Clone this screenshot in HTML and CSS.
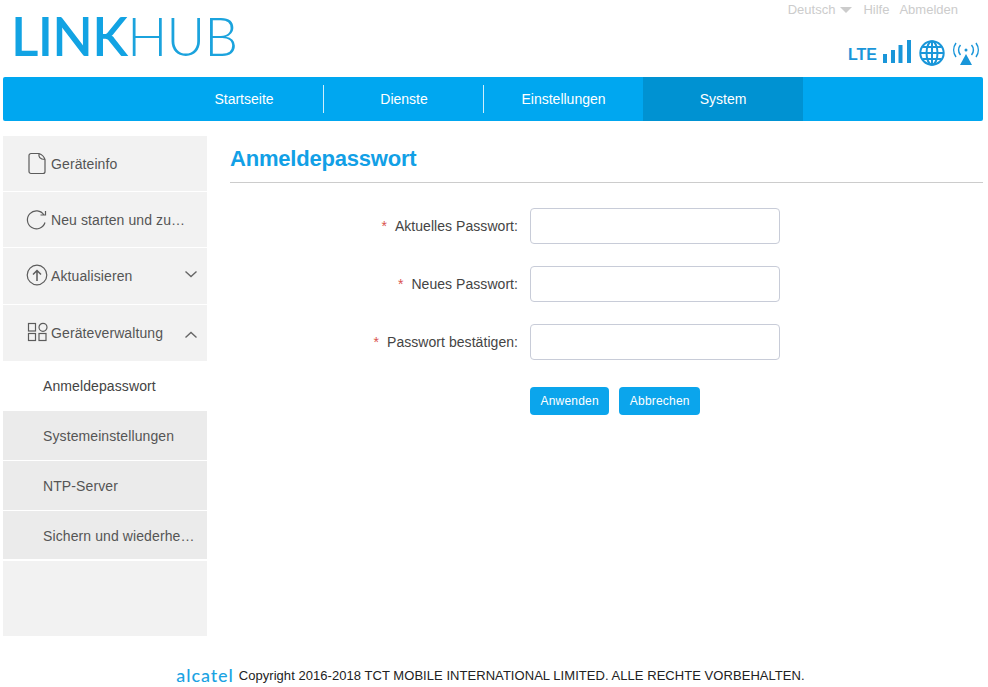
FILE: index.html
```html
<!DOCTYPE html>
<html lang="de">
<head>
    <meta charset="UTF-8">
    <title>LinkHub</title>
    <link rel="stylesheet" href="styles.css">
</head>
<body>
    <div class="header">
        <div class="logo"><b>LINK</b>HUB</div>
        <div class="header-right">
            <div class="toplinks">
                <span class="lang">Deutsch<i class="caret"></i></span>
                <span>Hilfe</span>
                <span>Abmelden</span>
            </div>
            <div class="status">
                <span class="lte">LTE</span>
                <svg class="bars" width="30" height="24" viewBox="0 0 30 24">
                    <rect x="0" y="14" width="4" height="9"/>
                    <rect x="8" y="10" width="4" height="13"/>
                    <rect x="15.500" y="5" width="4" height="18"/>
                    <rect x="24" y="0" width="4" height="23"/>
                </svg>
                <svg class="globe" width="26" height="26" viewBox="0 0 26 26">
                    <circle cx="13" cy="13" r="11.700"/>
                    <ellipse cx="13" cy="13" rx="5.500" ry="11.700"/>
                    <path d="M13 1.500v23M1.500 13h23M3.500 7h19M3.500 19h19"/>
                </svg>
                <svg class="signal" width="30" height="24" viewBox="0 0 30 24">
                    <circle class="dot" cx="15" cy="8" r="1.500"/>
                    <path d="M9.500 3a7.500 7.500 0 0 0 0 10M20.500 3a7.500 7.500 0 0 1 0 10M5 1a12 12 0 0 0 0 14M25 1a12 12 0 0 1 0 14"/>
                    <polygon class="dot" points="15,12 21,23 9,23"/>
                </svg>
            </div>
        </div>
    </div>

    <div class="nav">
        <a href="#">Startseite</a>
        <a href="#">Dienste</a>
        <a href="#">Einstellungen</a>
        <a href="#" class="nav-current">System</a>
    </div>

    <div class="main">
        <div class="sidebar">
            <div class="menu-item">
                <svg class="menu-icon" width="22" height="24" viewBox="0 0 22 24">
                    <path d="M5 1.500h8c3 1 5 3 6 6v12a2 2 0 0 1-2 2H5a2 2 0 0 1-2-2v-16a2 2 0 0 1 2-2zM13 1.500c-.5 3 .5 6 6 6"/>
                </svg>
                <span class="menu-text">Geräteinfo</span>
            </div>
            <div class="menu-item">
                <svg class="menu-icon" width="22" height="24" viewBox="0 0 22 24">
                    <path d="M18 7A9 9 0 1 0 19 14.500M14.500 7h5V3"/>
                </svg>
                <span class="menu-text">Neu starten und zu…</span>
            </div>
            <div class="menu-item menu-item-tall">
                <svg class="menu-icon" width="22" height="24" viewBox="0 0 22 24">
                    <circle cx="11" cy="11" r="9.800"/>
                    <path class="icon-heavy" d="M11 17V6.500M7 10.500l4-4 4 4"/>
                </svg>
                <span class="menu-text">Aktualisieren</span>
                <svg class="chevron chevron-down" width="14" height="8" viewBox="0 0 14 8"><path d="M1.500 1.500l5.500 5 5.500-5"/></svg>
            </div>
            <div class="menu-item menu-item-tall">
                <svg class="menu-icon" width="22" height="24" viewBox="0 0 22 24">
                    <rect x="2.500" y="2.500" width="7" height="7.500"/>
                    <circle cx="17" cy="6.300" r="4"/>
                    <rect x="2.500" y="12.500" width="7" height="7"/>
                    <rect x="13" y="12.500" width="7" height="7"/>
                </svg>
                <span class="menu-text">Geräteverwaltung</span>
                <svg class="chevron chevron-up" width="14" height="8" viewBox="0 0 14 8"><path d="M1.500 6.500l5.500-5 5.500 5"/></svg>
            </div>
            <div class="sub-item sub-current">Anmeldepasswort</div>
            <div class="sub-item">Systemeinstellungen</div>
            <div class="sub-item">NTP-Server</div>
            <div class="sub-item">Sichern und wiederhe…</div>
        </div>

        <div class="content">
            <h1 class="title">Anmeldepasswort</h1>
            <div class="form">
                <div class="form-row">
                    <label><span class="req">*</span>Aktuelles Passwort:</label>
                    <input type="password">
                </div>
                <div class="form-row">
                    <label><span class="req">*</span>Neues Passwort:</label>
                    <input type="password">
                </div>
                <div class="form-row">
                    <label><span class="req">*</span>Passwort bestätigen:</label>
                    <input type="password">
                </div>
                <div class="buttons">
                    <button>Anwenden</button>
                    <button>Abbrechen</button>
                </div>
            </div>
        </div>
    </div>

    <div class="footer">
        <span class="brand">alcatel</span>
        <span>Copyright 2016-2018 TCT MOBILE INTERNATIONAL LIMITED. ALLE RECHTE VORBEHALTEN.</span>
    </div>
</body>
</html>
```

FILE: styles.css
```css
* {
    box-sizing: border-box;
}
html, body {
    height: 100%;
}
body {
    margin: 0;
    padding: 0 5px 0 3px;
    background: #fff;
    font-family: "Liberation Sans", Arial, sans-serif;
    font-size: 14px;
    color: #444;
    overflow: hidden;
}

/* header */
.header {
    height: 77px;
    display: flex;
    justify-content: space-between;
}
.logo {
    padding: 4px 0 0 8px;
    font-family: Lato, sans-serif;
    font-size: 53px;
    line-height: 64px;
    font-weight: 300;
    color: #1ba3dd;
    letter-spacing: -0.700px;
}
.logo b {
    font-weight: 600;
    color: #12a3e3;
}
.header-right {
    display: flex;
    flex-direction: column;
    align-items: flex-end;
}
.toplinks {
    display: flex;
    gap: 10px;
    padding: 2px 25px 0 0;
    line-height: 16px;
    font-size: 13px;
    color: #ccc;
}
.lang {
    display: flex;
    align-items: center;
}
.caret {
    width: 0;
    height: 0;
    margin: 0 1px 0 5px;
    border: 6px solid transparent;
    border-top: 6px solid #ccc;
    border-bottom: 0;
}
.status {
    display: flex;
    align-items: center;
    gap: 6px;
    padding: 20px 2px 0 0;
}
.lte {
    margin-top: 6px;
    font-size: 16px;
    font-weight: bold;
    color: #1a96d9;
}
.bars rect {
    fill: #1a96d9;
}
.globe {
    margin-top: 2px;
    fill: none;
    stroke: #1a96d9;
    stroke-width: 2;
}
.signal {
    margin-top: 4px;
    fill: none;
    stroke: #1a96d9;
    stroke-width: 1.500;
}
.signal .dot {
    fill: #1a96d9;
    stroke: none;
}

/* nav */
.nav {
    height: 44px;
    padding-left: 160px;
    display: flex;
    align-items: center;
    background: #00a7f0;
    border-radius: 2px;
}
.nav a {
    width: 160px;
    height: 44px;
    line-height: 44px;
    text-align: center;
    color: #fff;
    text-decoration: none;
    position: relative;
}
.nav a:first-child {
    width: 161px;
    padding-left: 1px;
}
.nav a:nth-child(3) {
    width: 159px;
}
.nav a:nth-child(-n+2)::after {
    content: "";
    position: absolute;
    right: 0;
    top: 8px;
    height: 28px;
    border-right: 1px solid #cdeefc;
}
.nav a.nav-current {
    background: #0092d2;
}

/* sidebar */
.main {
    display: flex;
    margin-top: 15px;
}
.sidebar {
    width: 204px;
    height: 500px;
    background: #f2f2f2;
    flex-shrink: 0;
    letter-spacing: 0.1px;
}
.menu-item {
    height: 56px;
    display: flex;
    align-items: center;
    padding-left: 23px;
    border-bottom: 1px solid #fff;
    position: relative;
}
.menu-item-tall {
    height: 57px;
}
.menu-item:nth-child(4) {
    height: 56px;
    border-bottom: 0;
}
.menu-icon {
    flex-shrink: 0;
    fill: none;
    stroke: #5c5c5c;
    stroke-width: 1.200;
}
.icon-heavy {
    stroke-width: 1.500;
}
.menu-text {
    margin-left: 3px;
    color: #555;
}
.chevron {
    position: absolute;
    right: 9px;
    fill: none;
    stroke: #666;
    stroke-width: 1.400;
}
.chevron-down {
    top: 22px;
}
.chevron-up {
    top: 26px;
}
.sub-item {
    height: 50px;
    line-height: 50px;
    padding-left: 40px;
    background: #ebebeb;
    border-bottom: 1px solid #fff;
    color: #555;
}
.sub-item:last-child {
    border-bottom-width: 2px;
}
.sub-item.sub-current {
    background: #fff;
    border-bottom: 0;
    color: #444;
}

/* content */
.content {
    flex: 1;
    padding-left: 23px;
}
.title {
    margin: 0;
    height: 47px;
    line-height: 45px;
    font-size: 22px;
    letter-spacing: -0.2px;
    color: #12a0e6;
    border-bottom: 1px solid #ccc;
}
.form {
    padding-top: 25px;
}
.form-row {
    display: flex;
    align-items: center;
    gap: 12px;
    height: 36px;
    margin-bottom: 22px;
    letter-spacing: 0.05px;
}
.form-row label {
    width: 288px;
    text-align: right;
}
.req {
    color: #d9534f;
    margin-right: 8px;
}
.form-row input {
    width: 250px;
    height: 36px;
    background: #fff;
    border: 1px solid #c8ccd8;
    border-radius: 4px;
}
.buttons {
    display: flex;
    gap: 10px;
    margin: 27px 0 0 300px;
}
.buttons button {
    height: 28px;
    padding: 0 10.500px;
    background: #0ba5ec;
    border: 0;
    border-radius: 4px;
    color: #fff;
    font-family: inherit;
    font-size: 12px;
    letter-spacing: 0.2px;
}

/* footer */
.footer {
    margin-top: 29px;
    padding-right: 5px;
    display: flex;
    justify-content: center;
    align-items: center;
    gap: 5px;
    height: 20px;
    font-size: 13px;
    letter-spacing: 0.05px;
    color: #222;
}
.brand {
    font-family: Lato, sans-serif;
    font-size: 18px;
    font-weight: 500;
    line-height: 18px;
    letter-spacing: 0.9px;
    color: #1ba3e3;
}
```
